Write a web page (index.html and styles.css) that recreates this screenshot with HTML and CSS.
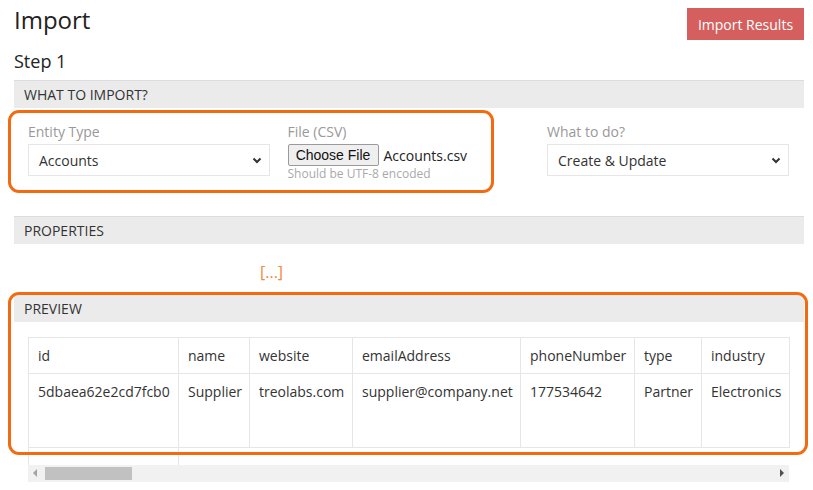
FILE: index.html
```html
<!DOCTYPE html>
<html lang="en">
<head>
<meta charset="utf-8">
<title>Import</title>
<link rel="stylesheet" href="styles.css">
</head>
<body>
<div class="page">
  <header class="top">
    <h1 class="title">Import</h1>
    <button class="btn-results">Import Results</button>
  </header>
  <h2 class="step">Step 1</h2>

  <section class="panel">
    <div class="panel-head">WHAT TO IMPORT?</div>
    <div class="panel-body form-grid">
      <div class="field">
        <div class="label">Entity Type</div>
        <div class="select"><span>Accounts</span>
          <svg class="chev" width="10" height="7" viewBox="0 0 10 7"><path d="M1.5 1.5 L5 5 L8.5 1.5" fill="none" stroke="#333" stroke-width="2"/></svg>
        </div>
      </div>
      <div class="field">
        <div class="label">File (CSV)</div>
        <div class="file-row"><span class="file-btn">Choose File</span><span class="file-name">Accounts.csv</span></div>
        <div class="hint">Should be UTF-8 encoded</div>
      </div>
      <div class="field">
        <div class="label">What to do?</div>
        <div class="select"><span>Create &amp; Update</span>
          <svg class="chev" width="10" height="7" viewBox="0 0 10 7"><path d="M1.5 1.5 L5 5 L8.5 1.5" fill="none" stroke="#333" stroke-width="2"/></svg>
        </div>
      </div>
    </div>
  </section>

  <section class="panel">
    <div class="panel-head">PROPERTIES</div>
    <div class="panel-body props-body"><span class="ellipsis">[...]</span></div>
  </section>

  <section class="panel">
    <div class="panel-head">PREVIEW</div>
    <div class="panel-body preview-body">
      <table class="grid">
        <colgroup>
          <col style="width:150px"><col style="width:71px"><col style="width:103px"><col style="width:168px"><col style="width:114px"><col style="width:67px"><col style="width:88px">
        </colgroup>
        <tr class="head-row"><td>id</td><td>name</td><td>website</td><td>emailAddress</td><td>phoneNumber</td><td>type</td><td>industry</td></tr>
        <tr class="data-row"><td>5dbaea62e2cd7fcb0</td><td>Supplier</td><td>treolabs.com</td><td>supplier@company.net</td><td>177534642</td><td>Partner</td><td>Electronics</td></tr>
        <tr class="ghost-row"><td></td><td class="open"></td><td class="none"></td><td class="none"></td><td class="none"></td><td class="none"></td><td class="none"></td></tr>
      </table>
      <div class="hscroll">
        <span class="arrow-left"></span>
        <span class="thumb"></span>
        <span class="track"></span>
        <span class="arrow-right"></span>
      </div>
    </div>
  </section>

  <div class="annot annot-1"></div>
  <div class="annot annot-2"></div>
</div>
</body>
</html>
```
FILE: styles.css
```css
* { box-sizing: border-box; }
html, body { margin: 0; padding: 0; background: #fff; }
body {
  font-family: "Open Sans", "DejaVu Sans", sans-serif;
  color: #333;
  width: 813px;
  height: 490px;
  overflow: hidden;
}
.page {
  position: relative;
  padding: 0 9px 0 14px;
  width: 813px;
}
.top {
  display: flex;
  justify-content: space-between;
  align-items: flex-start;
  height: 40px;
}
.title {
  margin: 4px 0 0 0;
  font-size: 24px;
  font-weight: 400;
  line-height: 32px;
  color: #222;
}
.btn-results {
  margin-top: 8px;
  height: 32px;
  width: 117px;
  padding: 0;
  border: none;
  background: #d45f5e;
  color: #fff;
  font-family: "Open Sans", sans-serif;
  font-size: 14px;
}
.step {
  margin: 9px 0 7px 0;
  font-size: 18px;
  font-weight: 400;
  line-height: 24px;
  color: #222;
}
.panel-head {
  height: 28px;
  background: #ebebeb;
  border-top: 1px solid #dcdcdc;
  padding-left: 10px;
  font-size: 14px;
  line-height: 27px;
  color: #333;
}
.panel-body { padding: 0 0 0 14px; }
.form-grid {
  display: grid;
  grid-template-columns: 242px 242px 242px;
  column-gap: 17.5px;
  padding: 15px 0 34px 14px;
}
.label {
  font-size: 14px;
  line-height: 18px;
  color: #999;
  margin-bottom: 3px;
}
.select {
  height: 32px;
  border: 1px solid #e6e6e6;
  display: flex;
  align-items: center;
  justify-content: space-between;
  padding: 0 7px 0 10px;
  font-size: 14px;
  color: #333;
}
.file-row {
  display: flex;
  align-items: center;
  height: 22px;
}
.file-btn {
  display: inline-flex;
  align-items: center;
  height: 22px;
  width: 91px;
  justify-content: center;
  background: #efefef;
  border: 1px solid #9a9a9a;
  border-radius: 2px;
  font-family: "Liberation Sans", Arial, sans-serif;
  font-size: 14px;
  color: #111;
}
.file-name {
  margin-left: 5px;
  font-size: 14px;
  color: #222;
}
.hint {
  font-size: 12px;
  line-height: 16px;
  color: #aaa;
}
.props-body {
  height: 50px;
  padding: 17px 0 0 246px;
  line-height: 22px;
}
.ellipsis {
  font-size: 16px;
  color: #ef8a3c;
}
.preview-body { padding: 15px 0 0 14px; }
.grid {
  border-collapse: collapse;
  table-layout: fixed;
  width: 761px;
  font-size: 14px;
  color: #333;
}
.grid td {
  border: 1px solid #e6e6e6;
  padding: 8px 9px 0 9px;
  vertical-align: top;
  line-height: 20px;
  white-space: nowrap;
  overflow: hidden;
}
.head-row td { height: 36px; }
.data-row td { height: 74px; }
.ghost-row td { height: 17px; padding: 0; border-bottom: none; }
.ghost-row td.open { border-right: none; }
.ghost-row td.none { border-left: none; border-right: none; }
.hscroll {
  display: flex;
  align-items: center;
  width: 761px;
  height: 17px;
  background: #f1f1f1;
}
.arrow-left {
  width: 0; height: 0;
  margin-left: 5px;
  border-top: 4px solid transparent;
  border-bottom: 4px solid transparent;
  border-right: 4px solid #a3a3a3;
}
.thumb {
  margin-left: 8px;
  width: 87px;
  height: 13px;
  background: #c1c1c1;
}
.track { flex: 1; }
.arrow-right {
  width: 0; height: 0;
  margin-right: 5px;
  border-top: 4px solid transparent;
  border-bottom: 4px solid transparent;
  border-left: 4px solid #505050;
}
.annot {
  position: absolute;
  border: 3px solid #f36a10;
  border-radius: 11px;
  pointer-events: none;
}
.annot-1 { left: 8px; top: 110px; width: 486px; height: 83px; }
.annot-2 { left: 8px; top: 292px; width: 800px; height: 163px; }
```
